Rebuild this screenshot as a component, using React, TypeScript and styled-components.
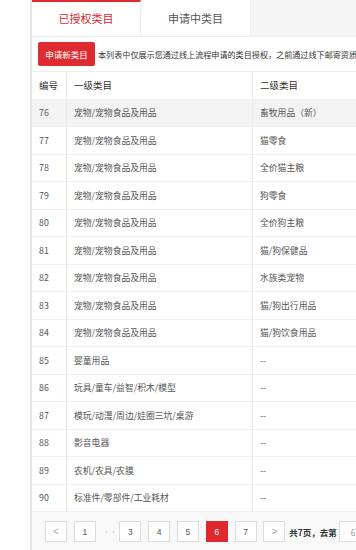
import React from "react";
import styled, { createGlobalStyle } from "styled-components";

const Global = createGlobalStyle`
  html, body { margin: 0; padding: 0; background: #fff; }
  body { font-family: "Noto Sans CJK SC", "Liberation Sans", sans-serif; color: #333; }
  * { box-sizing: border-box; }
`;

const Page = styled.div`
  width: 356px;
  height: 550px;
  overflow: hidden;
  padding-left: 30px;
  background: #fff;
`;

const Panel = styled.div`
  width: 410px;
  border-left: 2px solid #e6e6e6;
  display: flex;
  flex-direction: column;
`;

const TabBar = styled.div`
  display: flex;
  height: 36px;
  background: #f5f5f5;
`;

const Tab = styled.div<{ $active?: boolean }>`
  width: ${(p) => (p.$active ? 109 : 110)}px;
  display: flex;
  align-items: center;
  justify-content: center;
  font-size: 11px;
  background: #fff;
  color: ${(p) => (p.$active ? "#d8282e" : "#555")};
  border-top: 2px solid ${(p) => (p.$active ? "#e0282e" : "#fff")};
  border-right: 1px solid #ececec;
  padding-bottom: 2px;
`;

const Notice = styled.div`
  height: 36px;
  display: flex;
  align-items: center;
  gap: 3px;
  padding-left: 6px;
  background: #fff;
  border-top: 1px solid #eee;
  border-bottom: 1px solid #eee;
  overflow: hidden;
`;

const RedButton = styled.div`
  flex-shrink: 0;
  width: 57px;
  height: 24px;
  background: #de2b2f;
  color: #fff;
  font-size: 8.5px;
  border-radius: 2px;
  display: flex;
  align-items: center;
  justify-content: center;
`;

const NoticeText = styled.div`
  font-size: 8.1px;
  color: #333;
  white-space: nowrap;
`;

const Table = styled.div`
  display: flex;
  flex-direction: column;
`;

const Row = styled.div<{ $shade?: boolean; $head?: boolean }>`
  display: grid;
  grid-template-columns: 34px 186px 186px;
  height: 27.5px;
  background: ${(p) => (p.$shade ? "#f3f3f3" : "#fff")};
  border-bottom: 1px solid #f0f0f0;
  font-size: ${(p) => (p.$head ? "9.5px" : "8.8px")};
  color: ${(p) => (p.$head ? "#333" : "#555")};
`;

const Cell = styled.div`
  display: flex;
  align-items: center;
  padding-left: 7px;
  white-space: nowrap;
  & + & { border-left: 1px solid #ececec; }
`;

const Pager = styled.div`
  height: 40px;
  background: #f8f8f8;
  display: flex;
  align-items: center;
  gap: 6.8px;
  padding-left: 13px;
  padding-bottom: 1px;
`;

const PageBtn = styled.div<{ $active?: boolean }>`
  flex-shrink: 0;
  width: 22px;
  height: 21px;
  border: 1px solid ${(p) => (p.$active ? "#e0282e" : "#dcdcdc")};
  background: ${(p) => (p.$active ? "#e0282e" : "#fff")};
  color: ${(p) => (p.$active ? "#fff" : "#555")};
  font-size: 8.5px;
  display: flex;
  align-items: center;
  justify-content: center;
  font-family: "Liberation Sans", sans-serif;
`;

const Arrow = styled(PageBtn)`
  color: #aaa;
  font-size: 10px;
`;

const Dots = styled.div`
  flex-shrink: 0;
  width: 10px;
  font-size: 8px;
  color: #c8c8c8;
  text-align: center;
  letter-spacing: -1px;
`;

const Jump = styled.div`
  display: flex;
  align-items: center;
  margin-left: -3px;
  font-size: 8.5px;
  color: #333;
  font-weight: 600;
  white-space: nowrap;
`;

const JumpInput = styled.div`
  width: 34px;
  height: 21px;
  margin-left: 2px;
  border: 1px solid #ddd;
  background: #fff;
  color: #999;
  font-weight: 400;
  font-size: 8.5px;
  display: flex;
  align-items: center;
  padding-left: 11px;
`;

const rows: [number, string, string][] = [
  [76, "宠物/宠物食品及用品", "畜牧用品（新）"],
  [77, "宠物/宠物食品及用品", "猫零食"],
  [78, "宠物/宠物食品及用品", "全价猫主粮"],
  [79, "宠物/宠物食品及用品", "狗零食"],
  [80, "宠物/宠物食品及用品", "全价狗主粮"],
  [81, "宠物/宠物食品及用品", "猫/狗保健品"],
  [82, "宠物/宠物食品及用品", "水族类宠物"],
  [83, "宠物/宠物食品及用品", "猫/狗出行用品"],
  [84, "宠物/宠物食品及用品", "猫/狗饮食用品"],
  [85, "婴童用品", "--"],
  [86, "玩具/童车/益智/积木/模型", "--"],
  [87, "模玩/动漫/周边/娃圈三坑/桌游", "--"],
  [88, "影音电器", "--"],
  [89, "农机/农具/农膜", "--"],
  [90, "标准件/零部件/工业耗材", "--"],
];

export default function App() {
  return (
    <>
      <Global />
      <Page>
        <Panel>
          <TabBar>
            <Tab $active>已授权类目</Tab>
            <Tab>申请中类目</Tab>
          </TabBar>
          <Notice>
            <RedButton>申请新类目</RedButton>
            <NoticeText>本列表中仅展示您通过线上流程申请的类目授权，之前通过线下邮寄资质</NoticeText>
          </Notice>
          <Table>
            <Row $head>
              <Cell>编号</Cell>
              <Cell>一级类目</Cell>
              <Cell>二级类目</Cell>
            </Row>
            {rows.map(([n, a, b], i) => (
              <Row key={n} $shade={i === 0}>
                <Cell>{n}</Cell>
                <Cell>{a}</Cell>
                <Cell>{b}</Cell>
              </Row>
            ))}
          </Table>
          <Pager>
            <Arrow>&lt;</Arrow>
            <PageBtn>1</PageBtn>
            <Dots>···</Dots>
            <PageBtn>3</PageBtn>
            <PageBtn>4</PageBtn>
            <PageBtn>5</PageBtn>
            <PageBtn $active>6</PageBtn>
            <PageBtn>7</PageBtn>
            <Arrow>&gt;</Arrow>
            <Jump>
              共7页，去第
              <JumpInput>6</JumpInput>
            </Jump>
          </Pager>
        </Panel>
      </Page>
    </>
  );
}
